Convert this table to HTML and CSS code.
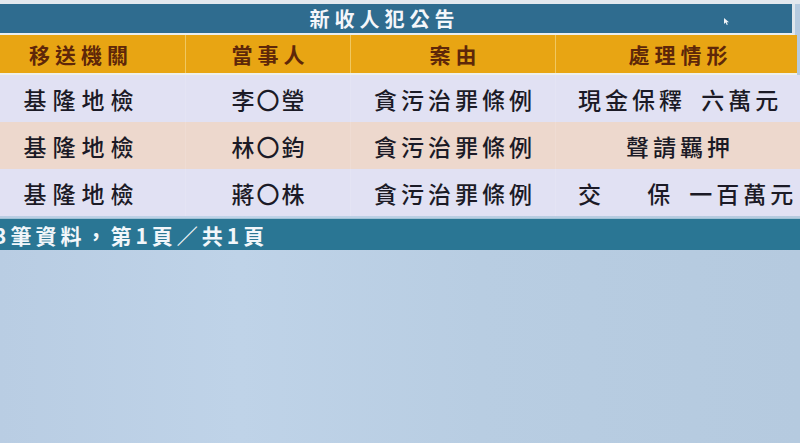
FILE: index.html
```html
<!DOCTYPE html>
<html lang="zh-Hant">
<head>
<meta charset="utf-8">
<title>新收人犯公告</title>
<link rel="stylesheet" href="styles.css">
</head>
<body>
<div class="screen">
  <div class="topstrip"></div>
  <div class="board">
    <div class="title">
      <span class="title-text">新收人犯公告</span>
      <span class="cursor"><svg width="6" height="7" viewBox="0 0 6 7"><path d="M0 0 L0 6 L1.6 4.6 L2.8 7 L3.8 6.5 L2.7 4.2 L5 4.2 Z" fill="#f2f4f8"/></svg></span>
    </div>
    <div class="row head">
      <div class="cell">移送機關</div>
      <div class="cell">當事人</div>
      <div class="cell">案由</div>
      <div class="cell">處理情形</div>
    </div>
    <div class="row odd">
      <div class="cell c1">基隆地檢</div>
      <div class="cell c2">李〇瑩</div>
      <div class="cell c3">貪污治罪條例</div>
      <div class="cell c4">現金保釋 六萬元</div>
    </div>
    <div class="row even">
      <div class="cell c1">基隆地檢</div>
      <div class="cell c2">林〇鈞</div>
      <div class="cell c3">貪污治罪條例</div>
      <div class="cell c4 mid">聲請羈押</div>
    </div>
    <div class="row odd">
      <div class="cell c1">基隆地檢</div>
      <div class="cell c2">蔣〇株</div>
      <div class="cell c3">貪污治罪條例</div>
      <div class="cell c4">交　 保 一百萬元</div>
    </div>
    <div class="footer">3筆資料，第1頁／共1頁</div>
  </div>
</div>
</body>
</html>
```
FILE: styles.css
```css
html, body {
  margin: 0;
  padding: 0;
}
body {
  width: 800px;
  height: 443px;
  overflow: hidden;
  background: linear-gradient(90deg, #b9cde3 0%, #bfd3e8 30%, #b8cde2 60%, #b5cadf 100%);
  font-family: "Noto Sans CJK TC", "Noto Sans CJK SC", sans-serif;
}
.screen {
  width: 800px;
  height: 443px;
  overflow: hidden;
}
.topstrip {
  height: 4px;
  background: #e3e8ee;
}
.board {
  margin-left: -28px;
  width: 828px;
}
.title {
  position: relative;
  height: 29px;
  margin-right: 5px;
  background: #2f6c8f;
  border-right: 3px solid #dfe6ec;
  display: flex;
  align-items: center;
  justify-content: center;
  border-bottom: 2px solid #e9eef0;
}
.title-text {
  color: #f4f6fa;
  font-size: 20px;
  font-weight: 700;
  letter-spacing: 5px;
  padding-left: 5px;
  line-height: 1;
}
.cursor {
  position: absolute;
  left: 752px;
  top: 14px;
  line-height: 0;
}
.row {
  display: grid;
  grid-template-columns: 213px 165px 205px 245px;
  height: 47px;
}
.cell {
  display: flex;
  align-items: center;
  justify-content: center;
  white-space: pre;
  color: #1b1a26;
  font-size: 23px;
  font-weight: 500;
  letter-spacing: 4px;
  padding-left: 4px;
  border-left: 1px solid rgba(255, 255, 255, 0.12);
}
.cell:first-child {
  border-left: none;
}
.head {
  height: 38px;
  margin-right: 3px;
  background: #e8a513;
  border-bottom: 2px solid #eef0ec;
}
.head .cell {
  color: #5e2709;
  font-size: 21px;
  font-weight: 600;
  letter-spacing: 5px;
  padding-left: 5px;
  border-left: 1px solid #f0c860;
}
.head .cell:first-child {
  border-left: none;
}
.odd {
  background: #e1e1f3;
}
.even {
  background: #edd8cd;
}
.c1 {
  letter-spacing: 6px;
  padding-left: 6px;
}
.c2 {
  letter-spacing: 2px;
  padding-left: 2px;
}
.c4 {
  justify-content: flex-start;
  padding-left: 22px;
  word-spacing: 6px;
}
.c4.mid {
  justify-content: center;
  padding-left: 4px;
}
.footer {
  height: 31px;
  margin-top: 2px;
  background: #2a7694;
  border-top: 1px solid #9fc1d4;
  color: #f2f6fa;
  font-size: 21px;
  font-weight: 700;
  letter-spacing: 4px;
  display: flex;
  align-items: center;
  padding-left: 22px;
  white-space: pre;
}
```
